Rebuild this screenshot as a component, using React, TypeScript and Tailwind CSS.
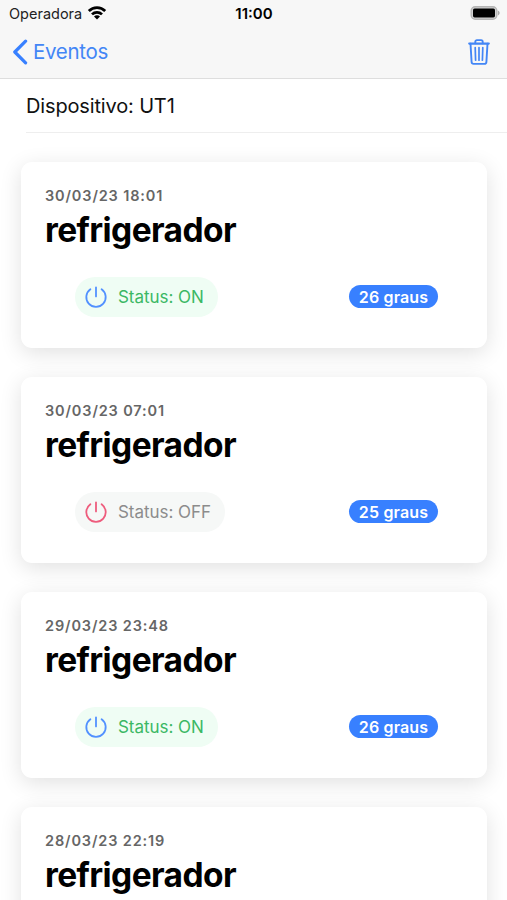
type Reading = { date: string; on: boolean; degrees: number };

const readings: Reading[] = [
  { date: "30/03/23 18:01", on: true, degrees: 26 },
  { date: "30/03/23 07:01", on: false, degrees: 25 },
  { date: "29/03/23 23:48", on: true, degrees: 26 },
  { date: "28/03/23 22:19", on: true, degrees: 26 },
];

function WifiIcon() {
  return (
    <svg viewBox="0 0 20 15" className="-mt-[2px] h-[15px] w-5" fill="none" stroke="#000" strokeWidth="2.7">
      <path d="M1.8 6a11.6 11.6 0 0 1 16.4 0" />
      <path d="M5 9.4a7.1 7.1 0 0 1 10 0" />
      <path d="M10 14.6 7 11.6a4.2 4.2 0 0 1 6 0Z" fill="#000" stroke="none" />
    </svg>
  );
}

function BatteryIcon() {
  return (
    <svg viewBox="0 0 32 16" className="-mt-px h-4 w-8">
      <rect x="2.2" y="1.7" width="25.6" height="12.6" rx="4" fill="#d2d2d2" stroke="#b5b5b5" strokeWidth="1.4" />
      <rect x="4" y="3.6" width="22" height="8.8" rx="1.6" fill="#000" />
      <path d="M28.9 5.6c2.3.7 2.3 4.1 0 4.8Z" fill="#ababab" />
    </svg>
  );
}

function TrashIcon() {
  return (
    <svg viewBox="0 0 24 28" className="h-7 w-6" fill="none" stroke="#4386f6" strokeWidth="1.9" strokeLinecap="round" strokeLinejoin="round">
      <path d="M3.5 5.8 4.6 24a2 2 0 0 0 2 1.9h10.8a2 2 0 0 0 2-1.9L20.5 5.8" />
      <path d="M2.2 5.6h19.6" strokeWidth="2.1" />
      <path d="M8.3 5.3V3.7a1.6 1.6 0 0 1 1.6-1.6h4.2a1.6 1.6 0 0 1 1.6 1.6v1.6" />
      <path d="M12 9.6v12.6M8.2 9.6l.4 12.6M15.8 9.6l-.4 12.6" strokeWidth="1.7" />
    </svg>
  );
}

function PowerIcon({ on }: { on: boolean }) {
  return (
    <svg viewBox="0 0 24 24" className="size-6" fill="none" stroke={on ? "#5291ff" : "#ee5c7d"} strokeWidth="1.8" strokeLinecap="round">
      <path d="M17.6 4.2a9.7 9.7 0 1 1-11.2 0" />
      <path d="M12 2.4v9" />
    </svg>
  );
}

function Card({ date, on, degrees }: Reading) {
  return (
    <article className="h-[186px] w-full shrink-0 rounded-[11px] bg-white px-[24px] pt-[25px] shadow-[0_5px_22px_rgba(0,0,0,0.12)]">
      <p className="h-[18px] text-[14.5px] leading-[18px] font-semibold tracking-[0.86px] text-[#666]">{date}</p>
      <h2 className="mt-[5px] h-10 text-[33.5px] leading-10 font-bold tracking-[-0.6px] text-black">refrigerador</h2>
      <div className="mt-[27px] flex items-center justify-between pr-[25px] pl-[30px]">
        <div className={`flex h-10 items-center gap-[10px] rounded-full pr-[14px] pl-[9px] text-[17px] ${on ? "bg-[#effdf4] text-[#3bb864]" : "bg-[#f6f8f7] text-[#8c8c8c]"}`}>
          <PowerIcon on={on} />
          <span className="leading-5 tracking-[-0.05px] whitespace-nowrap">Status: {on ? "ON" : "OFF"}</span>
        </div>
        <span className="mb-px flex h-[23px] w-[89px] items-center justify-center rounded-full bg-[#3880ff] text-[16px] leading-5 font-semibold tracking-[0.15px] whitespace-nowrap text-white">
          {degrees} graus
        </span>
      </div>
    </article>
  );
}

export default function App() {
  return (
    <div className="flex h-[900px] w-[507px] flex-col overflow-hidden bg-white font-['Inter','Liberation_Sans',sans-serif]">
      <header className="h-[79px] shrink-0 border-b border-[#dedede] bg-[#f7f7f7]">
        <div className="grid h-[27px] grid-cols-3 items-center pr-[6px] pl-[9px]">
          <div className="flex items-center gap-[5px]">
            <span className="text-[14.5px] leading-5 text-[#222]">Operadora</span>
            <WifiIcon />
          </div>
          <span className="-ml-[2px] text-center text-[15px] leading-5 font-semibold text-black">11:00</span>
          <div className="flex justify-end">
            <BatteryIcon />
          </div>
        </div>
        <div className="flex h-[50px] items-center justify-between pr-[16px] pl-[12px]">
          <button className="flex items-center gap-[5px] text-[#4386f6]">
            <svg viewBox="0 0 16 26" className="h-[26px] w-4" fill="none" stroke="#3880ff" strokeWidth="3.2" strokeLinecap="round" strokeLinejoin="round">
              <path d="M13.6 2.2 2.8 13l10.8 10.8" />
            </svg>
            <span className="text-[20.5px] leading-6 tracking-[-0.3px]">Eventos</span>
          </button>
          <button aria-label="Apagar">
            <TrashIcon />
          </button>
        </div>
      </header>
      <div className="ml-[26px] h-[54px] shrink-0 border-b border-[#eee]">
        <p className="pt-[14px] text-[20px] leading-[26px] tracking-[-0.15px] text-[#111]">Dispositivo: UT1</p>
      </div>
      <main className="flex flex-col gap-[29px] pt-[29px] pr-[20px] pl-[21px]">
        {readings.map((reading) => (
          <Card key={reading.date} {...reading} />
        ))}
      </main>
    </div>
  );
}
